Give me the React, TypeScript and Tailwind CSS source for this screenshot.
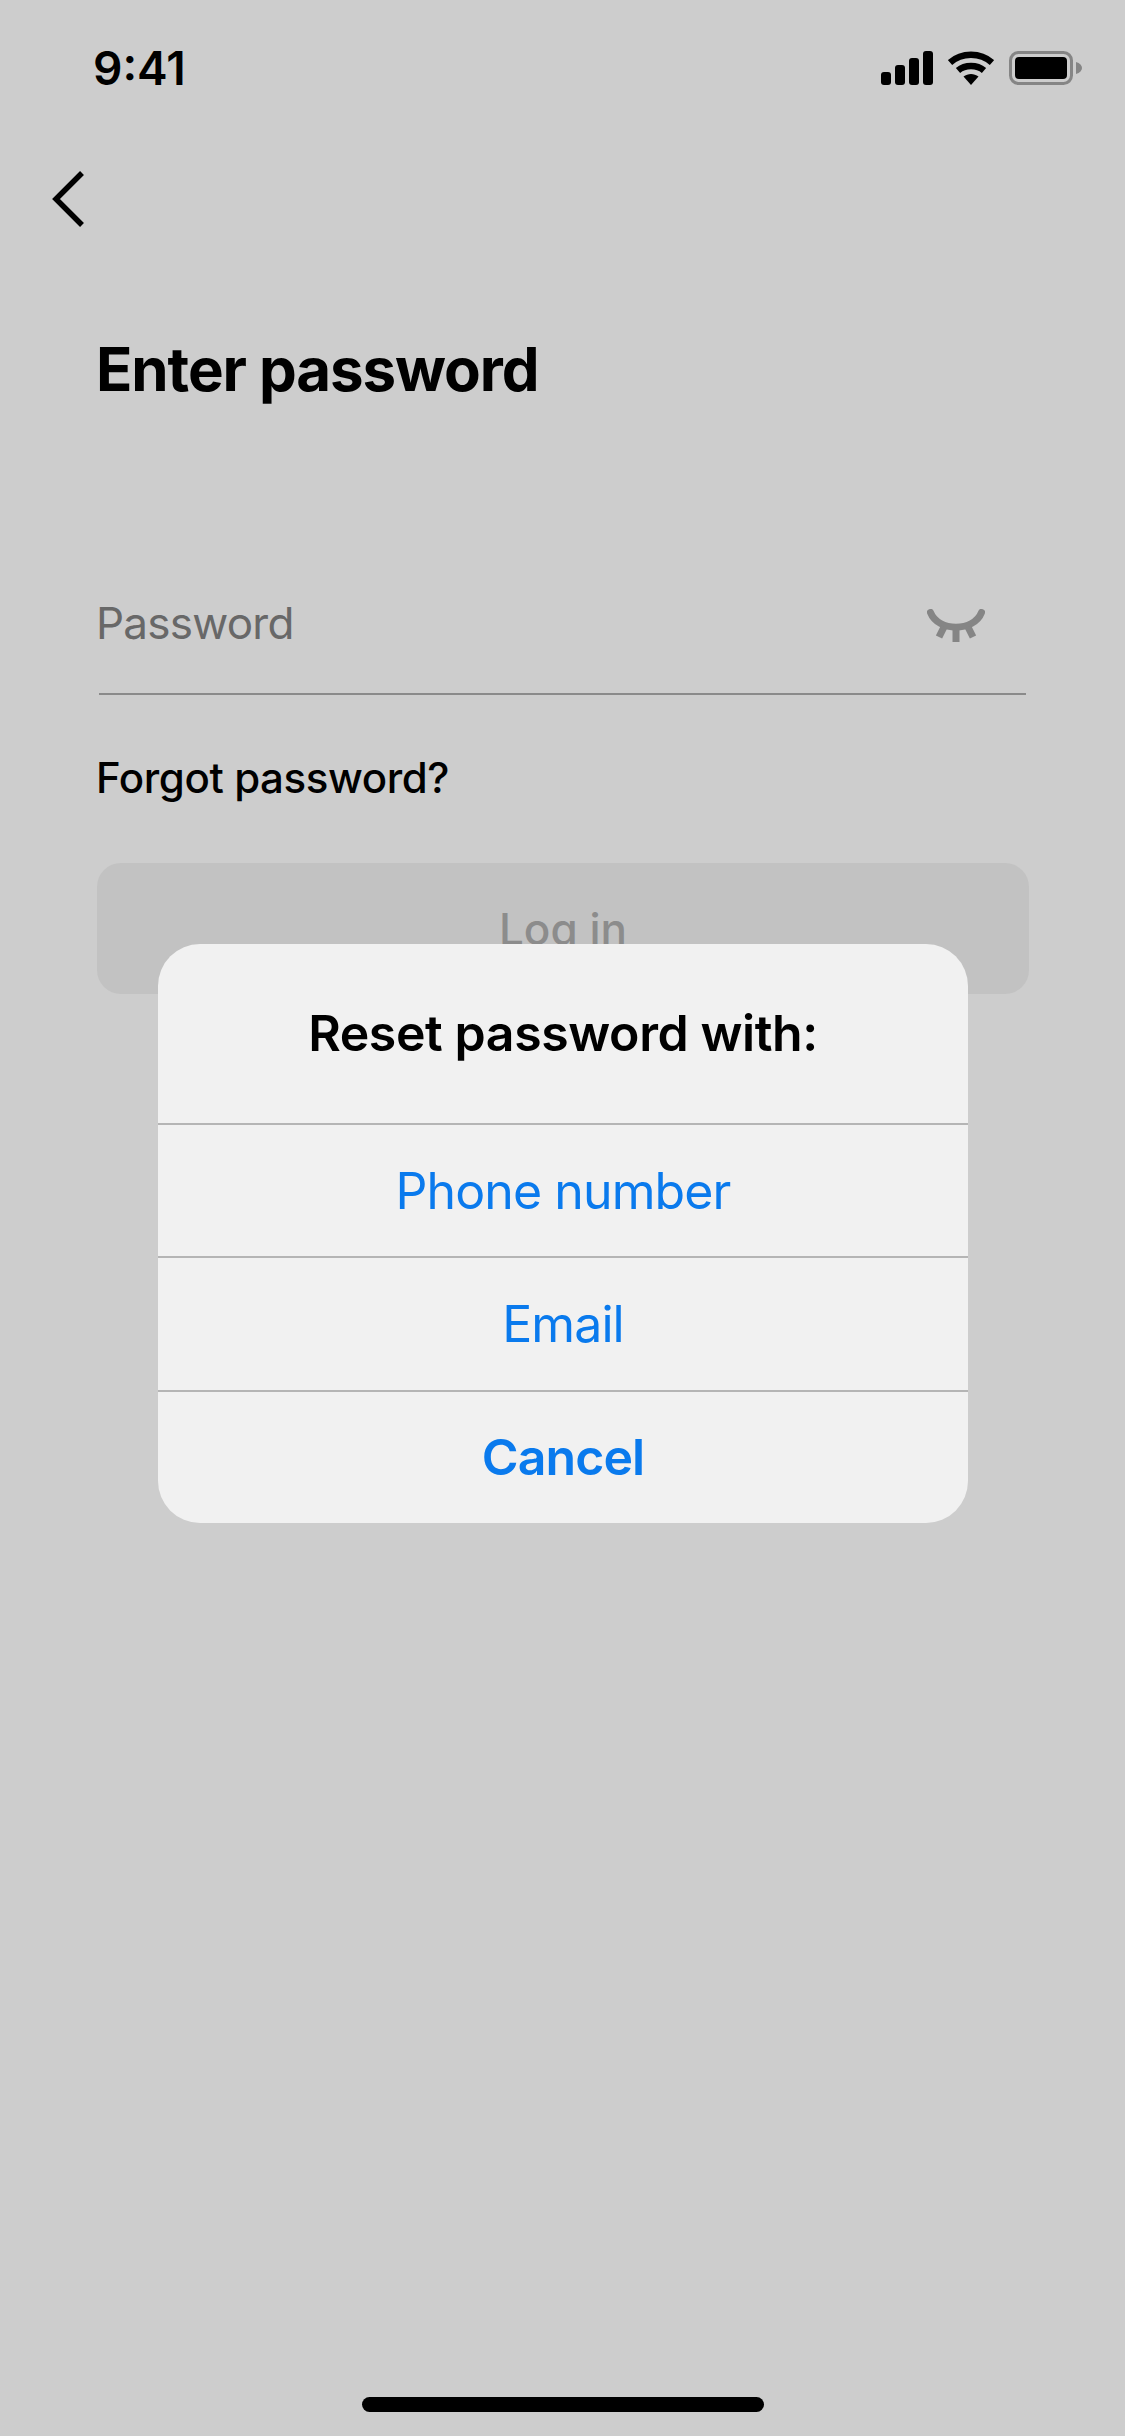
export default function App() {
  return (
    <div className="relative h-[2436px] w-[1125px] overflow-hidden bg-[#cdcdcd] font-['Inter',sans-serif] text-black">
      <div className="flex h-[136px] items-center justify-between pl-[93px] pr-[43px]">
        <span className="text-[46px] font-semibold leading-none">9:41</span>
        <div className="flex items-center gap-[15px]">
          <svg width="52" height="34" viewBox="0 0 52 34" fill="#000">
            <rect x="0" y="21" width="10" height="13" rx="3" />
            <rect x="14" y="14" width="10" height="20" rx="3" />
            <rect x="28" y="7" width="10" height="27" rx="3" />
            <rect x="42" y="0" width="10" height="34" rx="3" />
          </svg>
          <svg width="46" height="34" viewBox="0 0 46 34" fill="none">
            <path d="M2 11.5C13.5 1 32.5 1 44 11.5" stroke="#000" strokeWidth="6.5" />
            <path d="M10 19.5C17 13.5 29 13.5 36 19.5" stroke="#000" strokeWidth="6.5" />
            <path d="M15.5 25.5C20 22 26 22 30.5 25.5L23 34Z" fill="#000" />
          </svg>
          <svg width="73" height="34" viewBox="0 0 73 34" fill="none">
            <rect x="1.5" y="1.5" width="61" height="31" rx="8" stroke="#858585" strokeWidth="3" />
            <rect x="6" y="6" width="52" height="22" rx="4" fill="#000" />
            <path d="M67 11C71 12 73 14.500 73 17C73 19.500 71 22 67 23Z" fill="#858585" />
          </svg>
        </div>
      </div>

      <div className="flex h-[100px] items-start pl-[52px] pt-[35px]">
        <svg width="32" height="56" viewBox="0 0 32 56" fill="none">
          <path d="M30 2L4 28L30 54" stroke="#000" strokeWidth="5.500" />
        </svg>
      </div>

      <h1 className="mt-[98px] pl-[96px] text-[60px] font-bold leading-[70px] tracking-[-1.1px]">Enter password</h1>

      <div className="mt-[168px] flex h-[100px] items-center justify-between pl-[96px] pr-[140px]">
        <span className="pt-[2px] text-[44px] leading-none tracking-[-0.75px] text-[#686868]">Password</span>
        <svg width="58" height="34" viewBox="0 0 58 34" fill="none" stroke="#858585" strokeWidth="7" className="mt-[7px]">
          <path d="M3.500 3.500C11 23 47 23 54.500 3.500" strokeLinecap="round" />
          <path d="M17 18L12 28" />
          <path d="M29 20V33" />
          <path d="M41 18L46 28" />
        </svg>
      </div>
      <div className="ml-[99px] mt-[21px] h-[2px] w-[927px] bg-[#8a8a8a]" />

      <p className="mt-[58px] pl-[96px] text-[42px] font-medium leading-[50px] tracking-[-0.4px]">Forgot password?</p>

      <div className="ml-[97px] mt-[60px] flex h-[131px] w-[932px] items-center justify-center rounded-[24px] bg-[#c2c2c2]">
        <span className="text-[44px] font-medium leading-none text-[#8c8c8c]">Log in</span>
      </div>

      <div className="absolute left-[158px] top-[944px] w-[810px] overflow-hidden rounded-[42px] bg-[#f1f1f1]">
        <div className="flex h-[179px] items-center justify-center text-[50px] font-semibold tracking-[-0.4px]">Reset password with:</div>
        <div className="flex h-[133px] items-center justify-center border-t-2 border-[#b5b5b5] pt-[2px] text-[50px] tracking-[-0.9px] text-[#0a7aed]">Phone number</div>
        <div className="flex h-[134px] items-center justify-center border-t-2 border-[#b5b5b5] text-[50px] tracking-[-0.9px] text-[#0a7aed]">Email</div>
        <div className="flex h-[133px] items-center justify-center border-t-2 border-[#b5b5b5] text-[50px] font-semibold tracking-[-0.9px] text-[#0a7aed]">Cancel</div>
      </div>

      <div className="absolute bottom-[24px] left-[362px] h-[15px] w-[402px] rounded-full bg-black" />
    </div>
  );
}
